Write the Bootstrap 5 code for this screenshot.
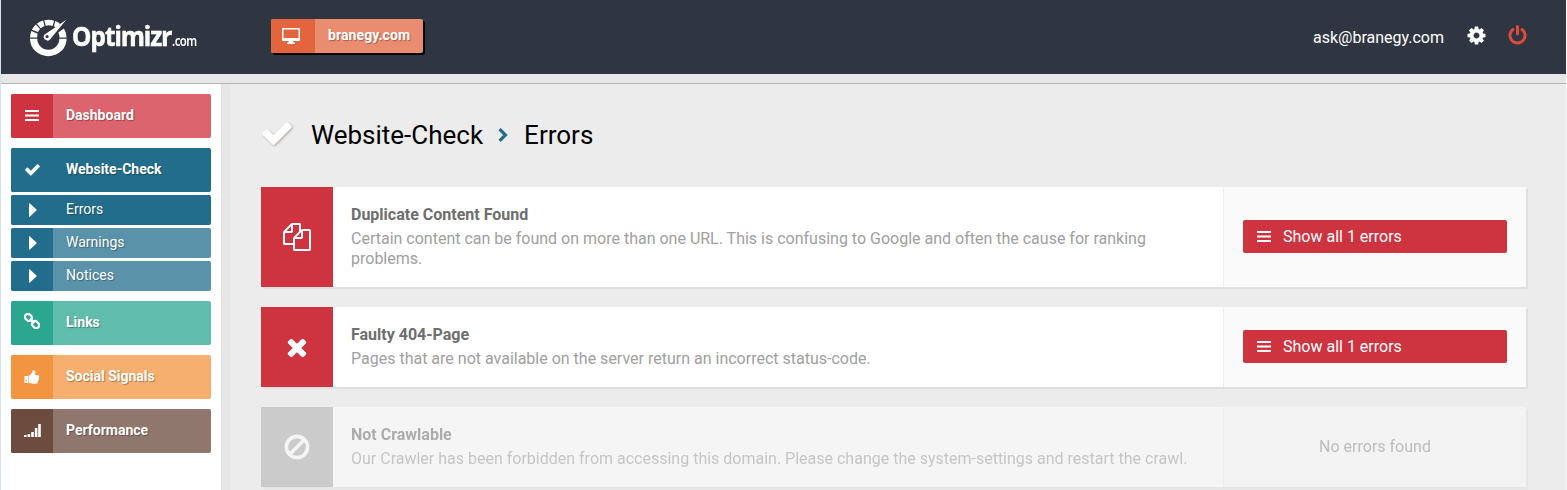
<!DOCTYPE html>
<html lang="en">
<head>
<meta charset="utf-8">
<meta name="viewport" content="width=device-width, initial-scale=1">
<title>Optimizr.com – Website-Check: Errors</title>
<link rel="stylesheet" href="https://cdn.jsdelivr.net/npm/bootstrap@5.3.0/dist/css/bootstrap.min.css">
<style>
  body { font-family: Roboto, "Liberation Sans", sans-serif; font-size: 16px; line-height: 20px; color: #000; background: #ececec; border-left: 1px solid #d5e2f2; border-right: 1px solid #f8f8f8; height: 490px; overflow: hidden; }
  a { text-decoration: none; }
  svg { display: block; flex: none; fill: currentColor; }
  svg.line { fill: none; }
  .topbar { height: 74px; background: #303641; padding: 0 38px 0 29px; }
  .strip { height: 10px; background: #e7e7e7; border-bottom: 1px solid #b5b5b5; }
  .brand { width: 170px; height: 40px; font-family: "Noto Sans", sans-serif; white-space: nowrap; }
  .brand-text { padding-top: 3px; }
  .brand-name, .brand-tld { transform-origin: 0 50%; }
  .brand-name { width: 99.5px; margin-left: 4px; font-size: 26px; font-weight: 700; letter-spacing: -1px; -webkit-text-stroke: .5px #fff; transform: scaleX(.94); }
  .brand-tld { font-size: 13.5px; font-weight: 600; letter-spacing: -.6px; transform: scaleX(.84); }
  .site-btn { height: 34px; margin: 0 0 2px 71px; border-radius: 2px; background: #e98c70; box-shadow: 2px 2px 0 #000; font-size: 14px; font-weight: 700; text-shadow: 1px 1px 1px rgba(0,0,0,.3); }
  .site-ico { width: 44px; background: #e2653e; border-radius: 2px 0 0 2px; }
  .site-name { width: 108px; padding: 0 0 2px 13px; letter-spacing: .1px; }
  .user { gap: 20px; margin-bottom: 3px; }
  .user span { margin: 4px 2px 0 0; }
  .side { width: 221px; padding: 10px 10px 0; background: #fff; border-right: 1px solid #e0e0e0; }
  .gutter-bar { width: 8px; background: #e7e7e7; }
  .side-link { height: 44px; margin-bottom: 10px; border-radius: 2px; color: #fff; font-size: 14px; font-weight: 700; overflow: hidden; text-shadow: 1px 1px 1px rgba(0,0,0,.3); }
  .side-link:hover { color: #fff; }
  .side-link .ico { width: 42px; padding-bottom: 1px; background: var(--c); }
  .side-link .txt { padding: 0 0 2px 13px; }
  .side-link.tight { margin-bottom: 3px; }
  .side-link.sub { height: 30px; margin-bottom: 3px; font-weight: 400; }
  .side-link.sub.last-sub { margin-bottom: 10px; }
  .side-link.sub .ico { padding: 0 0 0 1px; }
  .main { padding: 35px 40px 0 31px; }
  .page-title { height: 32px; margin-bottom: 36px; font-size: 26px; line-height: 32px; font-weight: 400; }
  .title-check { margin: 0 17px 4px -1px; color: #fff; filter: drop-shadow(1px 1px 1px rgba(80,40,20,.35)); }
  .title-arrow { margin: 0 16px 0 15px; }
  .result { margin-bottom: 20px; background: #fff; box-shadow: 2px 2px 0 #e0e0e0; }
  .result .tile { width: 72px; background: #ce3340; color: #fff; }
  .result .body-text { padding: 18px; color: #a0a0a0; }
  .result h2 { font-size: 16px; line-height: 20px; margin: 0 0 4px; font-weight: 700; color: #6e6e6e; }
  .result .action { width: 303px; flex: none; padding: 0 19px 1px; background: #fafafa; border-left: 1px solid #eee; }
  .show-btn { height: 33px; gap: 12px; padding: 0 14px; border-radius: 2px; background: #ce3340; color: #fff; }
  .show-btn:hover { color: #fff; }
  .result.off { opacity: .5; }
  .result.off .tile { background: #acacac; }
  .result.off .none { color: #8f8f8f; }
</style>
</head>
<body class="d-flex flex-column">
<svg width="0" height="0" class="position-absolute">
  <symbol id="check" viewBox="0 0 1792 1792"><path d="M1671 566q0 40-28 68l-724 724-136 136q-28 28-68 28t-68-28l-136-136-362-362q-28-28-28-68t28-68l136-136q28-28 68-28t68 28l294 295 656-657q28-28 68-28t68 28l136 136q28 28 28 68z"/></symbol>
  <symbol id="bars" viewBox="0 0 14 11"><path d="M0 0h14v2H0zM0 4.500h14v2H0zM0 9h14v2H0z"/></symbol>
  <symbol id="caret" viewBox="0 0 8 14"><path d="M0 .6Q0 0 .7.2L7.400 6.500Q7.800 7 7.400 7.500L.7 13.800Q0 14 0 13.400z"/></symbol>
</svg>

<header class="topbar d-flex align-items-center flex-shrink-0">
  <a href="#" class="brand d-flex align-items-center text-white">
    <svg width="38" height="40" viewBox="0 0 38 40">
      <g transform="translate(18.300 21)">
        <path d="M-18.300.7H-11A11 11 0 0 0 11 .7H18.300A18.300 17.500 0 0 1-18.300.7z"/>
        <path d="M-18.300-.5A18.300 18.300 0 0 1-16.900-7L-10.600-4.200A11 11 0 0 0-11.200-.5z"/>
        <path d="M-16.400-8.200A18.300 18.300 0 0 1-12.400-13.500L-8.300-9A11 11 0 0 0-10.300-6z"/>
        <path d="M-11.400-14.300A18.300 18.300 0 0 1-5.200-17.500L-3.800-12A11 11 0 0 0-7.400-9.800z"/>
        <path d="M-4-17.800A18.300 18.300 0 0 1 5.800-17.300L4.300-12A11 11 0 0 0-2.600-12.200z"/>
        <path d="M7-16.900A18.300 18.300 0 0 1 11.800-14L8.200-10.300 5.700-11.800z"/>
        <path d="M15.600-9.500A18.300 18.300 0 0 1 18.300-.5H11.200A11 11 0 0 0 10-5.400z"/>
        <path fill-rule="evenodd" d="M18-18.200L2.300.8A3.400 3.400 0 1 1-3.900-3.300zM-1.200-3A1.600 1.600 0 1 0-1.200.2A1.600 1.600 0 1 0-1.200-3z"/>
      </g>
    </svg>
    <span class="brand-text d-flex align-items-baseline"><span class="brand-name">Optimizr</span><span class="brand-tld">.com</span></span>
  </a>
  <a href="#" class="site-btn d-flex text-white">
    <span class="site-ico d-flex align-items-center justify-content-center">
      <svg width="18" height="16" viewBox="0 0 18 16" class="me-1"><path fill-rule="evenodd" d="M1 0h16q1 0 1 1v11q0 1-1 1h-5.500v1.500h1q.500 0 .500.500v1H5v-1q0-.5.500-.5h1V13H1q-1 0-1-1V1q0-1 1-1zM1.500 1.500v8.500h15V1.500z"/></svg>
    </span>
    <span class="site-name d-flex align-items-center">branegy.com</span>
  </a>
  <div class="user d-flex align-items-center text-white ms-auto">
    <span>ask@branegy.com</span>
    <svg width="21" height="21" viewBox="0 0 1792 1792"><path d="M1152 896q0-106-75-181t-181-75-181 75-75 181 75 181 181 75 181-75 75-181zm512-109v222q0 12-8 23t-20 13l-185 28q-19 54-39 91 35 50 107 138 10 12 10 25t-9 23q-27 37-99 108t-94 71q-12 0-26-9l-138-108q-44 23-91 38-16 136-29 186-7 28-36 28h-222q-14 0-24.500-8.500t-11.500-21.500l-28-184q-49-16-90-37l-141 107q-10 9-25 9-14 0-25-11-126-114-165-168-7-10-7-23 0-12 8-23 15-21 51-66.500t54-70.500q-27-50-41-99l-183-27q-13-2-21-12.500t-8-23.500v-222q0-12 8-23t19-13l186-28q14-46 39-92-40-57-107-138-10-12-10-24 0-10 9-23 26-36 98.500-107.500t94.500-71.500q13 0 26 10l138 107q44-23 91-38 16-136 29-186 7-28 36-28h222q14 0 24.500 8.500t11.500 21.500l28 184q49 16 90 37l142-107q9-9 24-9 13 0 25 10 129 119 165 170 7 8 7 22 0 12-8 23-15 21-51 66.500t-54 70.500q26 50 41 98l183 28q13 2 21 12.500t8 23.500z"/></svg>
    <svg width="21" height="21" viewBox="0 0 1792 1792" style="color:#de4a3c"><path d="M1664 896q0 156-61 298t-164 245-245 164-298 61-298-61-245-164-164-245-61-298q0-182 80.500-343t226.500-270q43-32 95.500-25t83.500 50q32 42 24.500 94.500t-49.500 84.500q-98 74-151.500 181t-53.500 228q0 104 40.500 198.500t109.500 163.500 163.500 109.500 198.500 40.500 198.500-40.500 163.500-109.500 109.500-163.500 40.500-198.500q0-121-53.500-228t-151.500-181q-42-32-49.500-84.500t24.500-94.500q31-43 84-50t95 25q146 109 226.500 270t80.500 343zm-640-768v640q0 52-38 90t-90 38-90-38-38-90v-640q0-52 38-90t90-38 90 38 38 90z"/></svg>
  </div>
</header>
<div class="strip flex-shrink-0"></div>

<div class="d-flex flex-grow-1 overflow-hidden">
  <nav class="side flex-shrink-0">
    <a href="#" class="side-link d-flex" style="--c:#ce3340;background:#dc646e"><span class="ico d-flex align-items-center justify-content-center"><svg width="14" height="11"><use href="#bars"/></svg></span><span class="txt d-flex align-items-center">Dashboard</span></a>
    <a href="#" class="side-link tight d-flex" style="--c:#226d8c;background:#226d8c"><span class="ico d-flex align-items-center justify-content-center"><svg width="17" height="17"><use href="#check"/></svg></span><span class="txt d-flex align-items-center">Website-Check</span></a>
    <a href="#" class="side-link sub d-flex" style="--c:#226d8c;background:#226d8c"><span class="ico d-flex align-items-center justify-content-center"><svg width="8" height="14"><use href="#caret"/></svg></span><span class="txt d-flex align-items-center">Errors</span></a>
    <a href="#" class="side-link sub d-flex" style="--c:#226d8c;background:#5992a9"><span class="ico d-flex align-items-center justify-content-center"><svg width="8" height="14"><use href="#caret"/></svg></span><span class="txt d-flex align-items-center">Warnings</span></a>
    <a href="#" class="side-link sub last-sub d-flex" style="--c:#226d8c;background:#5992a9"><span class="ico d-flex align-items-center justify-content-center"><svg width="8" height="14"><use href="#caret"/></svg></span><span class="txt d-flex align-items-center">Notices</span></a>
    <a href="#" class="side-link d-flex" style="--c:#2ca78f;background:#60bdac"><span class="ico d-flex align-items-center justify-content-center"><svg class="line mb-1" width="16" height="16" viewBox="0 0 16 16" stroke="#fff" stroke-width="2.200"><g transform="rotate(45 8 8)"><rect x="-.8" y="5" width="7.400" height="6" rx="3"/><rect x="9.400" y="5" width="7.400" height="6" rx="3"/><path d="M5 8h6"/></g></svg></span><span class="txt d-flex align-items-center">Links</span></a>
    <a href="#" class="side-link d-flex" style="--c:#f39540;background:#f6af6f"><span class="ico d-flex align-items-center justify-content-center"><svg width="16" height="14" viewBox="0 0 16 14"><path fill-rule="evenodd" d="M.5 6H4v7H.5zM1.500 10.700a.8.800 0 1 0 1.600 0a.8.800 0 1 0-1.600 0z"/><path d="M4.600 6Q6 5.600 7.300 3.500Q8.500 2.500 8.700.8Q9 .1 9.800.2Q12 .7 11.300 3.200L10.700 5H14Q15.500 5.200 15.300 6.700Q15.200 7.300 14.800 7.600Q15.400 8.700 14.500 9.600Q14.700 10.700 13.900 11.300Q14.200 13.500 12 13.700H9.500Q7.500 13.500 6 13H4.600z"/></svg></span><span class="txt d-flex align-items-center">Social Signals</span></a>
    <a href="#" class="side-link d-flex" style="--c:#6b4c3f;background:#90776d"><span class="ico d-flex align-items-center justify-content-center"><svg width="17" height="13" viewBox="0 0 17 13"><path d="M0 11h2.600v2H0zM3.600 10h2.600v3H3.600zM7.200 8h2.600v5H7.200zM10.800 4h2.600v9h-2.600zM14.200 0h2.600v13h-2.600z"/></svg></span><span class="txt d-flex align-items-center">Performance</span></a>
  </nav>
  <div class="gutter-bar flex-shrink-0"></div>
  <main class="main flex-grow-1 overflow-hidden">
    <h1 class="page-title d-flex align-items-center">
      <svg width="34" height="34" class="title-check"><use href="#check"/></svg>
      <span>Website-Check</span>
      <svg width="10" height="14" viewBox="0 0 10 14" stroke="#226d8c" stroke-width="3.200" class="line title-arrow"><path d="M1.600 1.200L7.400 7L1.600 12.800"/></svg>
      <span>Errors</span>
    </h1>

    <section class="result d-flex">
      <div class="tile d-flex align-items-center justify-content-center flex-shrink-0"><svg width="28" height="28" viewBox="0 0 1792 1792"><path d="M1696 384q40 0 68 28t28 68v1216q0 40-28 68t-68 28h-960q-40 0-68-28t-28-68v-288h-544q-40 0-68-28t-28-68v-672q0-40 20-88t48-76l408-408q28-28 76-48t88-20h416q40 0 68 28t28 68v328q68-40 128-40h416zm-544 213l-299 299h299v-299zm-640-384l-299 299h299v-299zm196 647l316-316v-416h-384v416q0 40-28 68t-68 28h-416v640h512v-256q0-40 20-88t48-76zm956 804v-1152h-384v416q0 40-28 68t-68 28h-416v640h896z"/></svg></div>
      <div class="body-text flex-grow-1"><h2>Duplicate Content Found</h2>Certain content can be found on more than one URL. This is confusing to Google and often the cause for ranking problems.</div>
      <div class="action d-flex align-items-center"><a href="#" class="show-btn d-flex align-items-center w-100"><svg width="14" height="11"><use href="#bars"/></svg>Show all 1 errors</a></div>
    </section>

    <section class="result d-flex">
      <div class="tile d-flex align-items-center justify-content-center flex-shrink-0"><svg width="28" height="28" viewBox="0 0 1792 1792"><path d="M1490 1322q0 40-28 68l-136 136q-28 28-68 28t-68-28l-294-294-294 294q-28 28-68 28t-68-28l-136-136q-28-28-28-68t28-68l294-294-294-294q-28-28-28-68t28-68l136-136q28-28 68-28t68 28l294 294 294-294q28-28 68-28t68 28l136 136q28 28 28 68t-28 68l-294 294 294 294q28 28 28 68z"/></svg></div>
      <div class="body-text flex-grow-1"><h2>Faulty 404-Page</h2>Pages that are not available on the server return an incorrect status-code.</div>
      <div class="action d-flex align-items-center"><a href="#" class="show-btn d-flex align-items-center w-100"><svg width="14" height="11"><use href="#bars"/></svg>Show all 1 errors</a></div>
    </section>

    <section class="result off d-flex mb-0">
      <div class="tile d-flex align-items-center justify-content-center flex-shrink-0"><svg class="line" width="26" height="26" viewBox="0 0 26 26" stroke="#fff" stroke-width="3.600"><circle cx="13" cy="13" r="10.600"/><path d="M5.500 20.500L20.500 5.500"/></svg></div>
      <div class="body-text flex-grow-1"><h2>Not Crawlable</h2>Our Crawler has been forbidden from accessing this domain. Please change the system-settings and restart the crawl.</div>
      <div class="action none d-flex align-items-center justify-content-center">No errors found</div>
    </section>
  </main>
</div>
<script src="https://cdn.jsdelivr.net/npm/bootstrap@5.3.0/dist/js/bootstrap.bundle.min.js"></script>
</body>
</html>
